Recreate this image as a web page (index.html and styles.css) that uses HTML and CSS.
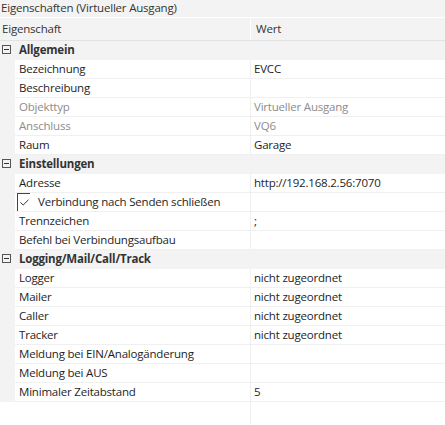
FILE: index.html
```html
<!DOCTYPE html>
<html lang="de">
<head>
<meta charset="utf-8">
<title>Eigenschaften</title>
<link rel="stylesheet" href="styles.css">
</head>
<body>
<div class="panel">
  <div class="title">Eigenschaften (Virtueller Ausgang)</div>
  <div class="header">
    <div class="h-name">Eigenschaft</div>
    <div class="h-value">Wert</div>
  </div>
  <div class="grid">
    <div class="row group"><div class="gut"><span class="minus"></span></div><div class="name">Allgemein</div><div class="val"></div></div>
    <div class="row"><div class="gut"></div><div class="name">Bezeichnung</div><div class="val">EVCC</div></div>
    <div class="row"><div class="gut"></div><div class="name">Beschreibung</div><div class="val"></div></div>
    <div class="row dis"><div class="gut"></div><div class="name">Objekttyp</div><div class="val">Virtueller Ausgang</div></div>
    <div class="row dis"><div class="gut"></div><div class="name">Anschluss</div><div class="val">VQ6</div></div>
    <div class="row"><div class="gut"></div><div class="name">Raum</div><div class="val">Garage</div></div>
    <div class="row group"><div class="gut"><span class="minus"></span></div><div class="name">Einstellungen</div><div class="val"></div></div>
    <div class="row"><div class="gut"></div><div class="name">Adresse</div><div class="val">http://192.168.2.56:7070</div></div>
    <div class="row"><div class="gut"></div><div class="name chk"><span class="box"><svg width="9" height="7" viewBox="0 0 9 7"><path d="M0.5 3.5 L3.2 6 L8.5 0.8" fill="none" stroke="#333" stroke-width="1"/></svg></span><span>Verbindung nach Senden schließen</span></div><div class="val"></div></div>
    <div class="row"><div class="gut"></div><div class="name">Trennzeichen</div><div class="val">;</div></div>
    <div class="row"><div class="gut"></div><div class="name">Befehl bei Verbindungsaufbau</div><div class="val"></div></div>
    <div class="row group"><div class="gut"><span class="minus"></span></div><div class="name">Logging/Mail/Call/Track</div><div class="val"></div></div>
    <div class="row"><div class="gut"></div><div class="name">Logger</div><div class="val">nicht zugeordnet</div></div>
    <div class="row"><div class="gut"></div><div class="name">Mailer</div><div class="val">nicht zugeordnet</div></div>
    <div class="row"><div class="gut"></div><div class="name">Caller</div><div class="val">nicht zugeordnet</div></div>
    <div class="row"><div class="gut"></div><div class="name">Tracker</div><div class="val">nicht zugeordnet</div></div>
    <div class="row"><div class="gut"></div><div class="name">Meldung bei EIN/Analogänderung</div><div class="val"></div></div>
    <div class="row"><div class="gut"></div><div class="name">Meldung bei AUS</div><div class="val"></div></div>
    <div class="row"><div class="gut"></div><div class="name">Minimaler Zeitabstand</div><div class="val">5</div></div>
    <div class="filler"><div></div><div class="fill-val"></div></div>
  </div>
</div>
</body>
</html>
```

FILE: styles.css
```css
html, body {
  margin: 0;
  padding: 0;
  height: 100%;
  background: #ffffff;
}
body {
  font-family: "Open Sans", "Noto Sans", sans-serif;
  font-size: 11.5px;
  letter-spacing: -0.2px;
  color: #1e1e1e;
}
.panel {
  display: flex;
  flex-direction: column;
  height: 425px;
  overflow: hidden;
}
.title {
  height: 17px;
  line-height: 16px;
  background: #f3f3f3;
  color: #333;
  padding-left: 1px;
  white-space: nowrap;
}
.header {
  margin-top: 1px;
  height: 23px;
  box-sizing: border-box;
  background: #f3f3f3;
  border-bottom: 1px solid #e2e2e2;
  display: grid;
  grid-template-columns: 250px 1fr;
  line-height: 22px;
  color: #333;
}
.h-name { padding-left: 2px; }
.h-value { border-left: 1px solid #ffffff; padding-left: 5px; }
.grid {
  display: flex;
  flex-direction: column;
  flex: 1;
}
.row {
  display: grid;
  grid-template-columns: 15px 235px 1fr;
  height: 19px;
  line-height: 18px;
  white-space: nowrap;
}
.gut { background: #f3f3f3; position: relative; }
.name, .val {
  border-bottom: 1px solid #f0f0f0;
  overflow: hidden;
}
.name { padding-left: 4px; }
.val { border-left: 1px solid #f0f0f0; padding-left: 3px; }
.group { background: #f3f3f3; }
.group .name { font-weight: 700; color: #333; border-bottom-color: #f3f3f3; }
.group .val { border-left-color: #f3f3f3; border-bottom-color: #f3f3f3; }
.dis .name, .dis .val { color: #8c8c8c; }
.minus {
  position: absolute;
  left: 2px;
  top: 4px;
  width: 9px;
  height: 9px;
  box-sizing: border-box;
  border: 1px solid #555;
}
.minus::after {
  content: "";
  position: absolute;
  left: 1px;
  right: 1px;
  top: 3px;
  height: 1px;
  background: #333;
}
.chk {
  padding-left: 2px;
  display: flex;
  align-items: flex-start;
}
.box {
  width: 13px;
  height: 18px;
  box-sizing: border-box;
  border-top: 1px solid #444;
  border-left: 1px solid #444;
  margin-right: 8px;
  display: flex;
  justify-content: center;
  padding-top: 5px;
}
.box svg { display: block; }
.filler {
  flex: 1;
  display: grid;
  grid-template-columns: 250px 1fr;
}
.fill-val { border-left: 1px solid #f0f0f0; }
```
